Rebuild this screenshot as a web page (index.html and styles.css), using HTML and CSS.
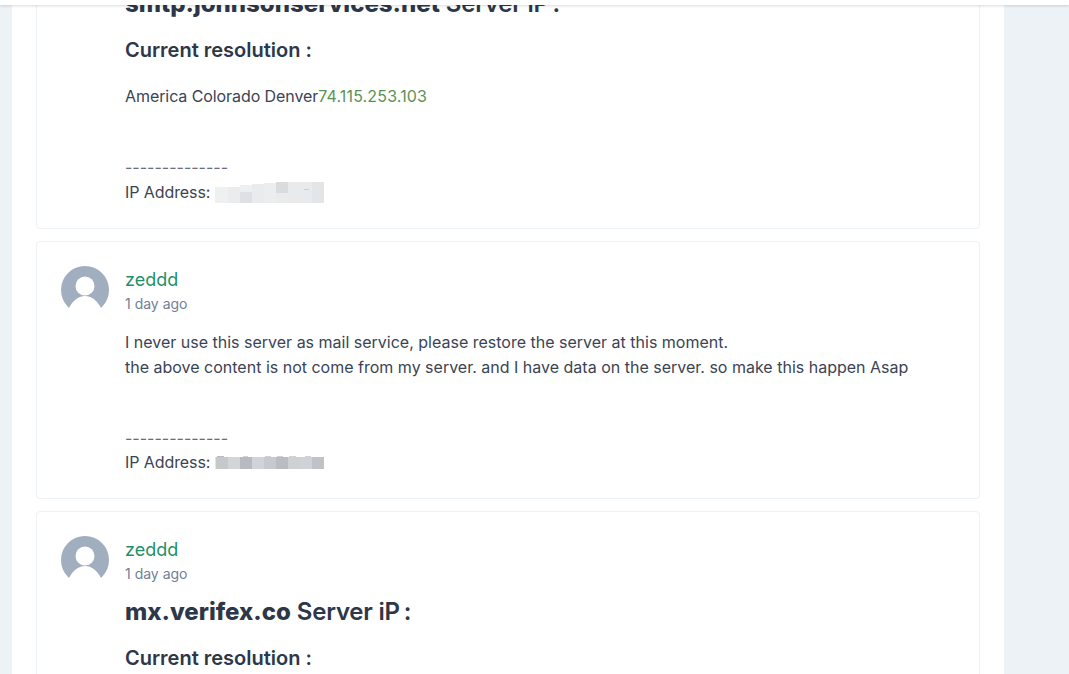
FILE: index.html
```html
<!DOCTYPE html>
<html lang="en">
<head>
<meta charset="utf-8">
<title>Ticket replies</title>
<link rel="stylesheet" href="styles.css">
</head>
<body>
<div class="topbar"></div>
<main class="panel">
  <article class="card card-first">
    <div class="avatar-col"></div>
    <div class="body">
      <h2 class="title"><strong>smtp.johnsonservices.net</strong> Server iP&thinsp;:</h2>
      <h3 class="subtitle">Current resolution :</h3>
      <p class="line">America Colorado Denver<span class="ip">74.115.253.103</span></p>
      <p class="sig-rule">--------------</p>
      <p class="sig">IP Address: <svg class="mosaic mosaic-light" viewBox="0 0 109 21" shape-rendering="crispEdges">
        <rect x="0" y="5" width="13" height="16" fill="#eff0f1"/>
        <rect x="13" y="5" width="12" height="16" fill="#ebeced"/>
        <rect x="25" y="3" width="12" height="7" fill="#eeeff0"/>
        <rect x="25" y="10" width="12" height="11" fill="#dfe0e3"/>
        <rect x="37" y="2" width="12" height="19" fill="#eaebed"/>
        <rect x="49" y="1" width="12" height="20" fill="#ecedef"/>
        <rect x="61" y="0" width="12" height="11" fill="#dadbde"/>
        <rect x="61" y="11" width="12" height="10" fill="#eaebec"/>
        <rect x="73" y="0" width="12" height="21" fill="#e9eaeb"/>
        <rect x="85" y="0" width="12" height="21" fill="#e8ebee"/>
        <rect x="97" y="0" width="12" height="21" fill="#e4e5e7"/>
        <rect x="89" y="7" width="5" height="1" fill="#d9c9c4"/>
      </svg></p>
    </div>
  </article>
  <article class="card">
    <div class="avatar-col">
      <svg class="avatar" viewBox="0 0 48 48"><circle cx="24" cy="24" r="24" fill="#a0aec0"/><circle cx="24" cy="20" r="9.500" fill="#fff"/><path d="M8 42C12 34 18 30 24 30S36 34 40 42V48H8Z" fill="#fff"/></svg>
    </div>
    <div class="body">
      <a class="name">zeddd</a>
      <div class="time">1 day ago</div>
      <p class="message">I never use this server as mail service, please restore the server at this moment.<br>the above content is not come from my server. and I have data on the server. so make this happen Asap</p>
      <p class="sig-rule">--------------</p>
      <p class="sig sig-tight">IP Address: <svg class="mosaic mosaic-dark" viewBox="0 0 109 14" shape-rendering="crispEdges">
        <rect x="2" y="1" width="7" height="1" fill="#b9bbbf"/>
        <rect x="28" y="1" width="5" height="1" fill="#d0d2d5"/>
        <rect x="50" y="1" width="6" height="1" fill="#d0d2d5"/>
        <rect x="62" y="1" width="6" height="1" fill="#d0d2d5"/>
        <rect x="74" y="1" width="7" height="1" fill="#d0d2d5"/>
        <rect x="90" y="1" width="6" height="1" fill="#d0d2d5"/>
        <rect x="0" y="2" width="1" height="12" fill="#e3e4e6"/>
        <rect x="1" y="2" width="12" height="12" fill="#c6c8cb"/>
        <rect x="13" y="2" width="12" height="12" fill="#d3d5d8"/>
        <rect x="25" y="2" width="12" height="12" fill="#b7bbc1"/>
        <rect x="37" y="2" width="12" height="12" fill="#d0d4d8"/>
        <rect x="49" y="2" width="12" height="12" fill="#c6c9ce"/>
        <rect x="61" y="2" width="12" height="12" fill="#b9bcc1"/>
        <rect x="73" y="2" width="12" height="12" fill="#cfd0d3"/>
        <rect x="85" y="2" width="12" height="12" fill="#cdd3d9"/>
        <rect x="97" y="2" width="12" height="12" fill="#bfc2c6"/>
      </svg></p>
    </div>
  </article>
  <article class="card">
    <div class="avatar-col">
      <svg class="avatar" viewBox="0 0 48 48"><circle cx="24" cy="24" r="24" fill="#a0aec0"/><circle cx="24" cy="20" r="9.500" fill="#fff"/><path d="M8 42C12 34 18 30 24 30S36 34 40 42V48H8Z" fill="#fff"/></svg>
    </div>
    <div class="body">
      <a class="name">zeddd</a>
      <div class="time">1 day ago</div>
      <h2 class="title title-gap"><strong>mx.verifex.co</strong> Server iP&thinsp;:</h2>
      <h3 class="subtitle">Current resolution :</h3>
    </div>
  </article>
</main>
</body>
</html>
```
FILE: styles.css
```css
* { box-sizing: border-box; }
html, body { height: 100%; }
body {
  margin: 0;
  background: #edf2f7;
  font-family: Inter, "Liberation Sans", sans-serif;
  color: #2d3748;
  overflow: hidden;
}
.topbar {
  position: fixed;
  top: 0; left: 0; right: 0;
  height: 5px;
  background: #fff;
  box-shadow: 0 1px 3px rgba(0,0,0,.15);
  z-index: 2;
}
.panel {
  width: 992px;
  height: 674px;
  margin-left: 12px;
  padding: 0 24px;
  background: #fff;
  overflow: hidden;
  display: flex;
  flex-direction: column;
  gap: 12px;
}
.card {
  display: flex;
  flex: none;
  gap: 16px;
  padding: 24px 24px 23px;
  border: 1px solid #edf2f7;
  border-radius: 4px;
  background: #fff;
}
.card-first { margin-top: -31px; padding-top: 20px; }
.avatar-col { width: 48px; flex: none; }
.avatar { display: block; width: 48px; height: 48px; }
.body { flex: 1; min-width: 0; font-size: 16px; line-height: 25px; color: #3a4454; }
.name { display: block; font-size: 18px; line-height: 28px; color: #1f9068; }
.time { font-size: 14px; line-height: 20px; color: #718096; }
.title { margin: 0; font-size: 24px; line-height: 28px; font-weight: 600; letter-spacing: -.2px; color: #2d3748; }
.title strong { font-weight: 800; letter-spacing: 0; }
.title-gap { margin-top: 14px; }
.subtitle { margin: 18px 0 0; font-size: 20px; line-height: 28px; font-weight: 600; color: #2d3748; }
.line { margin: 20px 0 0; letter-spacing: -.08px; }
.ip { color: #5b9255; letter-spacing: .15px; }
.message { margin: 16px 0 0; }
.sig-rule { margin: 46px 0 0; color: #666f7c; }
.sig { margin: 0; height: 25px; letter-spacing: -.08px; }
.sig-tight { margin-top: -1px; }
.mosaic { display: inline-block; width: 109px; }
.mosaic-light { height: 21px; vertical-align: -5px; }
.mosaic-dark { height: 14px; vertical-align: -1px; }
```
